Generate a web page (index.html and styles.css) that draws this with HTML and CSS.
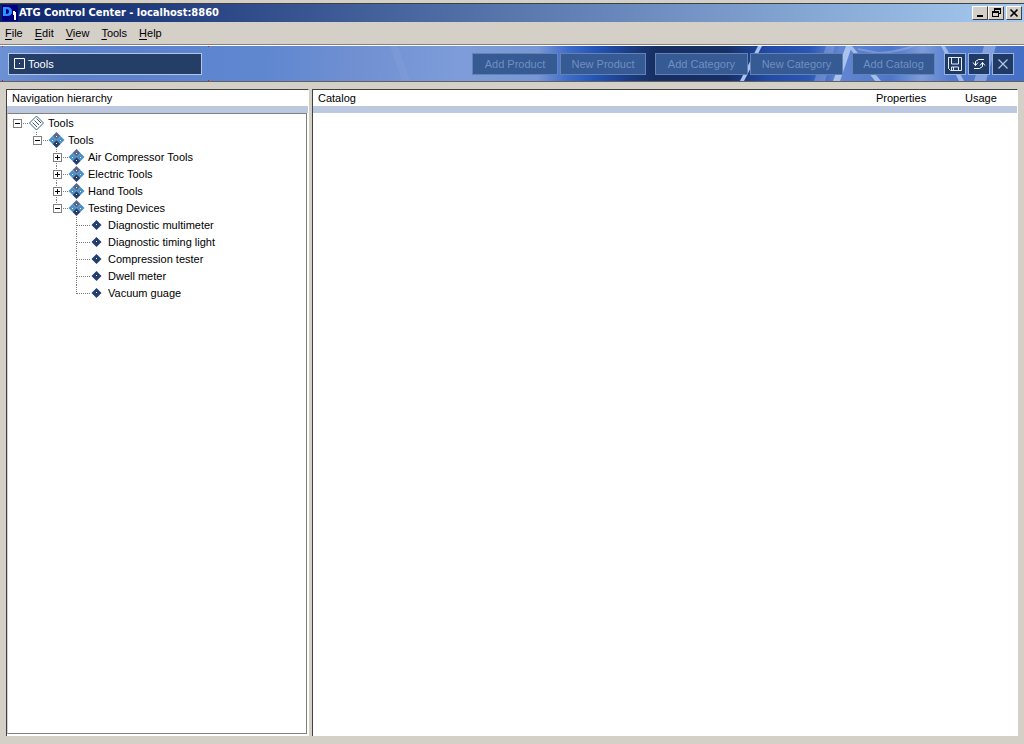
FILE: index.html
```html
<!DOCTYPE html>
<html lang="en">
<head>
<meta charset="utf-8">
<title>ATG Control Center - localhost:8860</title>
<link rel="stylesheet" href="styles.css">
</head>
<body>
<svg class="defs" width="0" height="0" aria-hidden="true">
  <defs>
    <g id="toggle-open" fill="none" stroke="#808080"><rect x="0.500" y="4.500" width="8" height="8" fill="#fff"/><path d="M2 8.500h5" stroke="#000"/></g>
    <g id="toggle-closed"><use href="#toggle-open"/><path d="M4.500 6v5" stroke="#000"/></g>
    <g id="dots" fill="none" stroke="#808080" stroke-dasharray="1 1"><path d="M10 8.500h6"/></g>
    <g id="trunk" fill="none" stroke="#808080" stroke-dasharray="1 1"><path d="M3.500 0v17"/></g>
    <g id="trunk-end" fill="none" stroke="#808080" stroke-dasharray="1 1"><path d="M3.500 0v9"/></g>
    <g id="leaf-dots" fill="none" stroke="#808080" stroke-dasharray="1 1"><path d="M4 8.500h13"/></g>
    <g id="catalog-icon">
      <path d="M23.500 1l7 7-7 7-7-7z" fill="#fff" stroke="#24507c" stroke-width=".9"/>
      <path d="M19.500 7.500l4.500 4.500M21.500 5.500l4.500 4.500M23.500 3.500l4.500 4.500" stroke="#24406c" stroke-width=".9" fill="none"/>
    </g>
    <g id="category-icon">
      <path d="M23.500 0l4 4-4 4-4-4z" fill="#56688c"/>
      <path d="M19.500 4l4 4-4 4-4-4z" fill="#4a90c8"/>
      <path d="M27.500 4l4 4-4 4-4-4z" fill="#4a90c8"/>
      <path d="M23.500 8l4 4-4 4-4-4z" fill="#243e6c"/>
      <path d="M23 4h1v1h-1zM19 8h1v1h-1zM27 8h1v1h-1zM23 11h1v1h-1z" fill="#fff"/>
    </g>
    <g id="product-icon"><path d="M23.500 3l5 5-5 5-5-5z" fill="#243e6c"/><path d="M23 7h1v1h-1z" fill="#fff"/></g>
  </defs>
</svg>

<div class="window">
  <header class="titlebar">
    <svg class="app-icon" width="16" height="16" viewBox="0 0 16 16" aria-hidden="true">
      <path d="M0 0h16v16H0z" fill="#000080"/>
      <path d="M1 2h4q5 0 5 4.500t-5 4.500H1zM4 4v5q3 0 3-2.500T4 4z" fill="#3090ff" fill-rule="evenodd"/>
      <path d="M11 6h2v1h1v8h-2v-5h-1z" fill="#fff"/>
    </svg>
    <h1>ATG Control Center - localhost:8860</h1>
    <div class="window-buttons">
      <button type="button" aria-label="Minimize"><svg width="12" height="10"><path d="M3 7h6v2H3z"/></svg></button>
      <button type="button" aria-label="Restore"><svg width="12" height="10"><path d="M4 0h7v6H9V5h1V2H5v1H4zM2 3h7v6H2zM3 5v3h5V5z" fill-rule="evenodd"/></svg></button>
      <button type="button" aria-label="Close" class="close"><svg width="12" height="10"><path d="M2.500 1.500l7 7M9.500 1.500l-7 7" stroke="#000" stroke-width="1.600"/></svg></button>
    </div>
  </header>

  <nav class="menubar" aria-label="Main menu">
    <button type="button"><u>F</u>ile</button>
    <button type="button"><u>E</u>dit</button>
    <button type="button"><u>V</u>iew</button>
    <button type="button"><u>T</u>ools</button>
    <button type="button"><u>H</u>elp</button>
  </nav>

  <div class="toolbar">
    <svg class="toolbar-art" viewBox="0 0 1024 35" preserveAspectRatio="none" aria-hidden="true">
      <defs>
        <linearGradient id="sky" gradientUnits="userSpaceOnUse" x1="0" y1="0" x2="1024" y2="30">
          <stop offset="0" stop-color="#6d91d4"/><stop offset=".07" stop-color="#5b80cc"/>
          <stop offset=".26" stop-color="#5f87d0"/><stop offset=".35" stop-color="#7190d2"/>
          <stop offset=".45" stop-color="#7d9cd9"/><stop offset=".525" stop-color="#7897d6"/>
          <stop offset=".555" stop-color="#3d6bca"/><stop offset=".58" stop-color="#2456b8"/>
          <stop offset=".61" stop-color="#1c3f8c"/><stop offset=".64" stop-color="#162e62"/>
          <stop offset=".71" stop-color="#162f66"/><stop offset=".75" stop-color="#224ba6"/>
          <stop offset=".79" stop-color="#2a56b6"/><stop offset=".82" stop-color="#6386d2"/>
          <stop offset=".87" stop-color="#4c76cc"/><stop offset=".9" stop-color="#7d9cda"/>
          <stop offset=".93" stop-color="#527bce"/><stop offset="1" stop-color="#446fc6"/>
        </linearGradient>
      </defs>
      <path d="M0 0h1024v35H0z" fill="url(#sky)"/>
      <path d="M390 0h8l12 35h-8z" fill="#8ba7dc" opacity=".25"/>
      <path d="M758 0h4l-18 35h-4z" fill="#a9c4f4"/>
      <path d="M826 0h9l-10 35h-11z" fill="#86a4e0" opacity=".5"/>
      <path d="M846 0h6l-12 35h-7z" fill="#a9c2ee"/>
      <path d="M848 0h4l29 35h-6z" fill="#a3bdec"/>
      <path d="M910 0q-14 5-32 6l-20-4v2l20 4q22-1 38-8z" fill="#9ab4e6" opacity=".5"/>
      <path d="M941 0h4l19 35h-5z" fill="#9fb9ea"/>
      <path d="M984 0h12l-10 35h-12z" fill="#9ab4e6" opacity=".7"/>
      <path d="M2 0h1v1H2zM208 0h1v1h-1zM2 34h1v1H2zM208 34h1v1h-1z" fill="#f00"/>
    </svg>
    <button type="button" class="view-picker">
      <svg width="11" height="11" aria-hidden="true"><path d="M.5 .5h10v10H.5z" fill="none" stroke="#fff"/><path d="M5 5h1v1H5z" fill="#fff"/></svg>
      Tools
    </button>
    <div class="actions">
      <div class="action-group">
        <button type="button" class="action" disabled>Add Product</button>
        <button type="button" class="action" disabled>New Product</button>
      </div>
      <div class="action-group">
        <button type="button" class="action wide" disabled>Add Category</button>
        <button type="button" class="action wide" disabled>New Category</button>
      </div>
      <div class="action-group">
        <button type="button" class="action narrow" disabled>Add Catalog</button>
      </div>
      <div class="action-group">
        <button type="button" class="icon-action" aria-label="Save"><svg width="16" height="16" fill="none" stroke="#e4ecf6"><path d="M1.500 1.500h13v13h-11l-2-2zM4.500 2v6h7V2M4.500 14v-3h7v3M6.500 11v3"/></svg></button>
        <button type="button" class="icon-action" aria-label="Refresh"><svg width="16" height="16" fill="none" stroke="#fff"><path d="M13 3.500H7.500l-3 2v4M2 6.500l2.500 3 2.500-3M3 12.500h5.500l3-2v-4M9 9.500l2.500-3 2.500 3"/></svg></button>
        <button type="button" class="icon-action" aria-label="Close view"><svg width="16" height="16" fill="none" stroke="#b5c6e2" stroke-width="1.200"><path d="M3.500 3.500l9 9M12.500 3.500l-9 9"/></svg></button>
      </div>
    </div>
  </div>

  <main class="workspace">
    <section class="panel navigation">
      <h2>Navigation hierarchy</h2>
      <div class="tree-box">
        <ul class="tree">
          <li><div class="row"><svg><use href="#toggle-open"/><use href="#dots"/><use href="#catalog-icon"/></svg>Tools</div>
            <ul>
              <li><div class="row"><svg><use href="#trunk-end"/><use href="#toggle-open"/><use href="#dots"/><use href="#category-icon"/></svg>Tools</div>
                <ul>
                  <li><div class="row"><svg><use href="#trunk"/><use href="#toggle-closed"/><use href="#dots"/><use href="#category-icon"/></svg>Air Compressor Tools</div></li>
                  <li><div class="row"><svg><use href="#trunk"/><use href="#toggle-closed"/><use href="#dots"/><use href="#category-icon"/></svg>Electric Tools</div></li>
                  <li><div class="row"><svg><use href="#trunk"/><use href="#toggle-closed"/><use href="#dots"/><use href="#category-icon"/></svg>Hand Tools</div></li>
                  <li><div class="row"><svg><use href="#trunk-end"/><use href="#toggle-open"/><use href="#dots"/><use href="#category-icon"/></svg>Testing Devices</div>
                    <ul>
                      <li><div class="row"><svg><use href="#trunk"/><use href="#leaf-dots"/><use href="#product-icon"/></svg>Diagnostic multimeter</div></li>
                      <li><div class="row"><svg><use href="#trunk"/><use href="#leaf-dots"/><use href="#product-icon"/></svg>Diagnostic timing light</div></li>
                      <li><div class="row"><svg><use href="#trunk"/><use href="#leaf-dots"/><use href="#product-icon"/></svg>Compression tester</div></li>
                      <li><div class="row"><svg><use href="#trunk"/><use href="#leaf-dots"/><use href="#product-icon"/></svg>Dwell meter</div></li>
                      <li><div class="row"><svg><use href="#trunk-end"/><use href="#leaf-dots"/><use href="#product-icon"/></svg>Vacuum guage</div></li>
                    </ul>
                  </li>
                </ul>
              </li>
            </ul>
          </li>
        </ul>
      </div>
    </section>
    <section class="panel details">
      <table>
        <thead><tr><th>Catalog</th><th class="properties">Properties</th><th class="usage">Usage</th></tr></thead>
      </table>
    </section>
  </main>
</div>
</body>
</html>
```
FILE: styles.css
```css
* { box-sizing: border-box; }

body {
  margin: 0;
  background: #d4d0c8;
  color: #000;
  font: 11px/16px "Liberation Sans", Arial, sans-serif;
}

button { font: inherit; color: inherit; margin: 0; }
svg { display: block; flex: none; }
.defs { position: absolute; }

.window {
  display: flex;
  flex-direction: column;
  min-height: 100vh;
  padding-top: 3px;
}

.titlebar {
  display: flex;
  align-items: center;
  gap: 1px;
  height: 19px;
  padding: 0 2px;
  border-top: 1px solid #404040;
  background: linear-gradient(90deg, #0a246a, #a6caf0);
  color: #fff;
}
.titlebar h1 {
  flex: 1;
  margin: 0;
  font: bold 11px/16px "DejaVu Sans Condensed", "DejaVu Sans", sans-serif;
}
.window-buttons { display: flex; }
.window-buttons button {
  width: 16px;
  height: 14px;
  padding: 1px;
  border: 1px solid;
  border-color: #fff #404040 #404040 #fff;
  background: #d4d0c8;
}
.window-buttons .close { margin-left: 2px; }

.menubar {
  display: flex;
  gap: 12px;
  height: 23px;
  padding: 0 5px;
  border-bottom: 1px solid #808080;
}
.menubar button { padding: 0; border: 0; background: none; }
.menubar u { text-underline-offset: 2px; }

.toolbar {
  position: relative;
  display: flex;
  align-items: center;
  justify-content: space-between;
  height: 37px;
  padding: 0 10px 0 8px;
  border-top: 1px solid #fff;
  border-bottom: 1px solid #606060;
}
.toolbar-art { position: absolute; inset: 0; width: 100%; height: 100%; }
.view-picker, .actions { position: relative; }
.view-picker {
  display: flex;
  align-items: center;
  gap: 3px;
  width: 194px;
  height: 22px;
  padding: 0 5px;
  border: 1px solid #b4c6e4;
  background: #243e68;
  color: #fff;
}
.actions { display: flex; gap: 9px; }
.action-group { display: flex; gap: 2px; }
.action {
  min-width: 86px;
  height: 22px;
  padding: 0 10px;
  border: 1px solid #6683b0;
  background: #365a94;
  color: #708fc2;
}
.action.wide { min-width: 93px; }
.action.narrow { min-width: 83px; }
.icon-action {
  width: 22px;
  height: 22px;
  padding: 2px;
  border: 1px solid #98b2dc;
  background: #203a68;
}

.workspace {
  flex: 1;
  display: grid;
  grid-template-columns: 303px 1fr;
  gap: 3px;
  padding: 7px 6px 8px;
}
.panel {
  display: flex;
  flex-direction: column;
  border-top: 1px solid #404040;
  border-left: 1px solid #404040;
  border-right: 1px solid #fff;
  background: #fff;
}
.panel h2 {
  margin: 0;
  padding: 0 5px;
  border-bottom: 7px solid #bcc8e0;
  font: inherit;
}
.tree-box {
  flex: 1;
  margin: 0 1px 2px 0;
  padding: 1px 5px;
  border: 1px solid #808080;
  border-left-color: #d4d0c8;
}
.tree, .tree ul { margin: 0; padding: 0; list-style: none; }
.tree ul { padding-left: 20px; }
.row { display: flex; align-items: flex-start; gap: 3px; height: 17px; }
.row svg { width: 32px; height: 17px; }

table { width: 100%; border-collapse: collapse; }
th {
  padding: 0 5px;
  border-bottom: 7px solid #bcc8e0;
  font-weight: normal;
  text-align: left;
}
.properties { width: 89px; }
.usage { width: 57px; }
```
